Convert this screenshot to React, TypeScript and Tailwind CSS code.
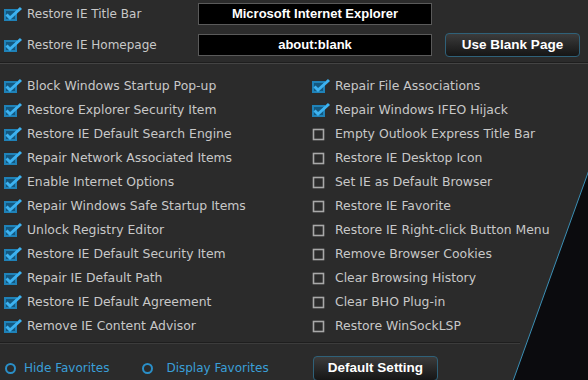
import React from 'react'

const left = [
  'Block Windows Startup Pop-up',
  'Restore Explorer Security Item',
  'Restore IE Default Search Engine',
  'Repair Network Associated Items',
  'Enable Internet Options',
  'Repair Windows Safe Startup Items',
  'Unlock Registry Editor',
  'Restore IE Default Security Item',
  'Repair IE Default Path',
  'Restore IE Default Agreement',
  'Remove IE Content Advisor',
]

const right: [string, boolean][] = [
  ['Repair File Associations', true],
  ['Repair Windows IFEO Hijack', true],
  ['Empty Outlook Express Title Bar', false],
  ['Restore IE Desktop Icon', false],
  ['Set IE as Default Browser', false],
  ['Restore IE Favorite', false],
  ['Restore IE Right-click Button Menu', false],
  ['Remove Browser Cookies', false],
  ['Clear Browsing History', false],
  ['Clear BHO Plug-in', false],
  ['Restore WinSockLSP', false],
]

function Check({ on }: { on: boolean }) {
  if (!on)
    return (
      <svg width="20" height="16" viewBox="0 0 20 16" className="shrink-0">
        <rect x="1.5" y="3.5" width="10" height="10" fill="none" stroke="#a8a8a8" strokeWidth="1.6" />
      </svg>
    )
  return (
    <svg width="20" height="16" viewBox="0 0 20 16" className="shrink-0">
      <rect x="0" y="3" width="13" height="12" fill="#1f82b8" />
      <rect x="2" y="5" width="9" height="8" fill="#14587f" />
      <path d="M2.5 8.5 L6 12 L17 2" fill="none" stroke="#3db2f0" strokeWidth="3" />
    </svg>
  )
}

function Button({ children, className }: { children: React.ReactNode; className: string }) {
  return (
    <div
      className={`flex items-center justify-center rounded-[4px] border border-[#2f6179] bg-gradient-to-b from-[#3c3c3c] to-[#161616] font-['Liberation_Sans',sans-serif] text-[13.5px] font-bold text-white ${className}`}
    >
      {children}
    </div>
  )
}

export default function App() {
  return (
    <div className="relative h-[380px] w-[588px] overflow-hidden bg-[#2b2b2b] font-['DejaVu_Sans',sans-serif] text-[12px] text-[#c8c8c8]">
      <div className="flex flex-col gap-[9px] pt-[3px]">
        <div className="flex h-[22px] items-center">
          <div className="flex w-[198px] items-center gap-[3px] pl-[4px]">
            <Check on />
            <span>Restore IE Title Bar</span>
          </div>
          <div className="flex h-[22px] w-[234px] items-center justify-center border border-[#5a5a5a] bg-black font-['Liberation_Sans',sans-serif] text-[13px] font-bold text-white">
            Microsoft Internet Explorer
          </div>
        </div>
        <div className="flex h-[22px] items-center">
          <div className="flex w-[198px] items-center gap-[3px] pl-[4px]">
            <Check on />
            <span>Restore IE Homepage</span>
          </div>
          <div className="flex h-[22px] w-[234px] items-center justify-center border border-[#5a5a5a] bg-black font-['Liberation_Sans',sans-serif] text-[13px] font-bold text-white">
            about:blank
          </div>
          <Button className="ml-[13px] h-[24px] w-[135px]">Use Blank Page</Button>
        </div>
      </div>

      <div className="mt-[6px] h-[2px] border-t border-[#1e1e1e] bg-[#444]" />

      <div className="mt-[10px] grid grid-cols-[308px_1fr] text-[12.4px]">
        <div className="flex flex-col">
          {left.map((t) => (
            <div key={t} className="flex h-[24px] items-center gap-[3px] pl-[4px]">
              <Check on />
              <span>{t}</span>
            </div>
          ))}
        </div>
        <div className="flex flex-col">
          {right.map(([t, on]) => (
            <div key={t} className="flex h-[24px] items-center gap-[3px] pl-[4px]">
              <Check on={on} />
              <span>{t}</span>
            </div>
          ))}
        </div>
      </div>

      <div className="mt-[4px] h-[2px] w-[520px] border-t border-[#1e1e1e] bg-[#3c3c3c]" />

      <div className="mt-[12px] flex h-[24px] items-center text-[#3a9fd8]">
        <div className="flex items-center gap-[8px] pl-[5px]">
          <span className="h-[11px] w-[11px] rounded-full border-[2px] border-[#2a8fc8]" />
          <span>Hide Favorites</span>
        </div>
        <div className="ml-[33px] flex items-center gap-[13px]">
          <span className="h-[11px] w-[11px] rounded-full border-[2px] border-[#2a8fc8]" />
          <span>Display Favorites</span>
        </div>
        <Button className="ml-auto mr-[150px] h-[25px] w-[125px]">Default Setting</Button>
      </div>

      <svg className="pointer-events-none absolute left-0 top-0" width="588" height="380" viewBox="0 0 588 380">
        <polygon points="589,170 513,381 589,381" fill="#0b0b0e" />
        <line x1="589" y1="170" x2="513" y2="381" stroke="#3b8fb5" strokeWidth="1" />
      </svg>
    </div>
  )
}
